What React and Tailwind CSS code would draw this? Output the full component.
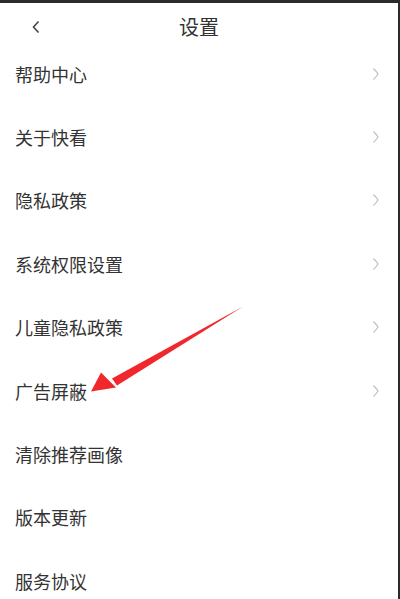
import React from "react";

const items = [
  { label: "帮助中心", arrow: true },
  { label: "关于快看", arrow: true },
  { label: "隐私政策", arrow: true },
  { label: "系统权限设置", arrow: true },
  { label: "儿童隐私政策", arrow: true },
  { label: "广告屏蔽", arrow: true },
  { label: "清除推荐画像", arrow: false },
  { label: "版本更新", arrow: false },
  { label: "服务协议", arrow: false },
];

function Chevron() {
  return (
    <svg width="8" height="14" viewBox="0 0 8 14" className="mr-[18px]">
      <path d="M1.5 1.5 Q4 4 6 7 Q4 10 1.5 12.5" fill="none" stroke="#c2c2c2" strokeWidth="1.3" />
    </svg>
  );
}

export default function App() {
  return (
    <div
      className="relative w-[400px] h-[599px] overflow-hidden bg-white border-t-[3px] border-r-[2px] border-[#2b2b2b] text-[#333]"
      style={{ fontFamily: '"Noto Sans CJK SC", "Noto Sans", sans-serif' }}
    >
      {/* header */}
      <div className="relative flex items-center justify-center h-[50px] pb-[2px]">
        <svg width="10" height="14" viewBox="0 0 10 14" className="absolute left-[31px] top-[17px]">
          <path d="M7.5 1.5 L2.5 7 L7.5 12.5" fill="none" stroke="#444" strokeWidth="1.6" />
        </svg>
        <span className="text-[20px] leading-none text-[#333]">设置</span>
      </div>

      <div className="-mt-[11px]">
        {items.map((it) => (
          <div key={it.label} className="flex items-center justify-between h-[63.4px] pl-[15px]">
            <span className="text-[18px] leading-none">{it.label}</span>
            {it.arrow && <Chevron />}
          </div>
        ))}
      </div>

      {/* red annotation arrow */}
      <svg className="absolute left-0 top-0" width="400" height="599" viewBox="0 0 400 596">
        <path d="M243 302 L112 374 L117 381 Z" fill="#f0282d" />
        <path d="M91 387 L101 368 L116 383 Z" fill="#f0282d" />
      </svg>
    </div>
  );
}
